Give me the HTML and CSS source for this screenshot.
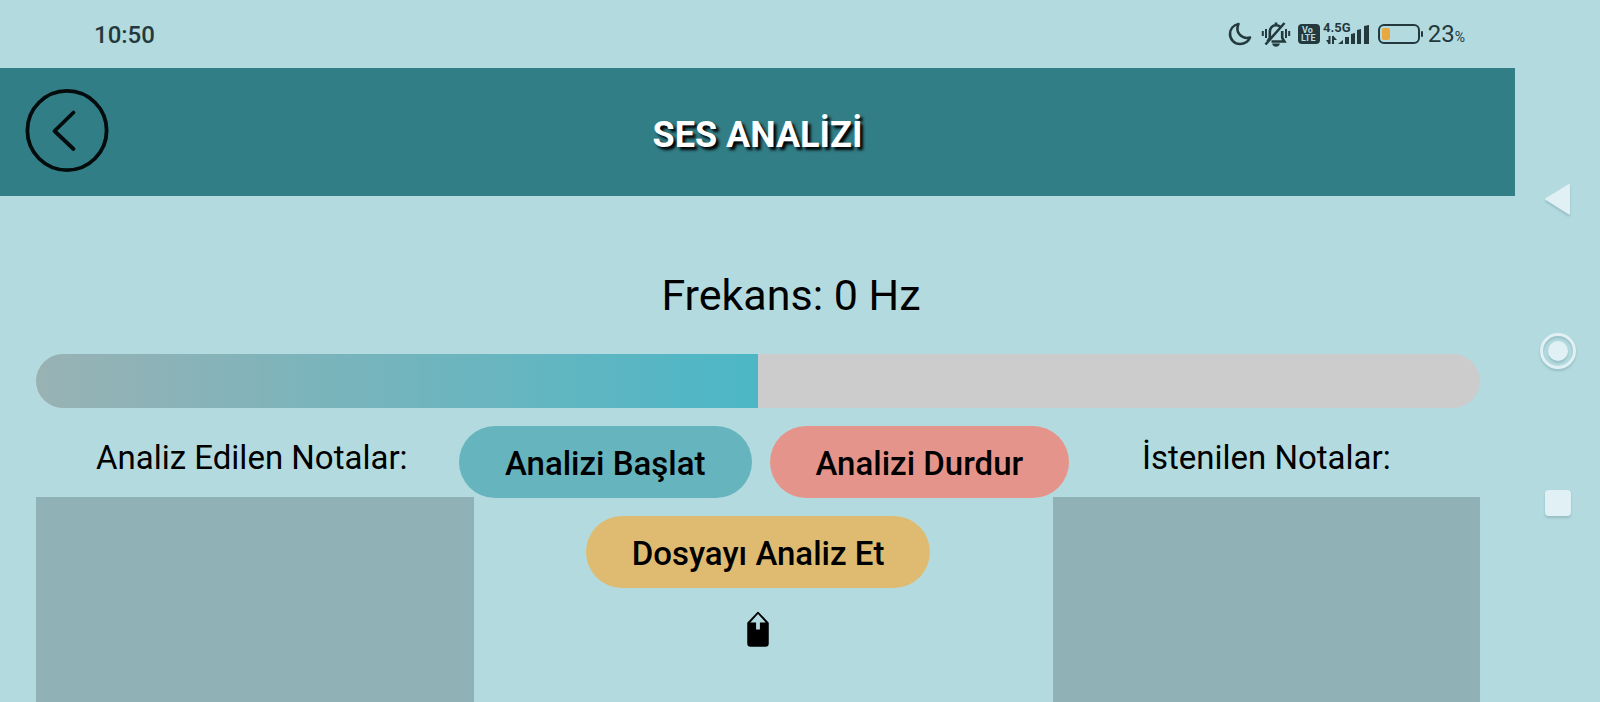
FILE: index.html
```html
<!DOCTYPE html>
<html lang="tr">
<head>
<meta charset="utf-8">
<meta name="viewport" content="width=device-width, initial-scale=1">
<title>Ses Analizi</title>
<link rel="stylesheet" href="styles.css">
</head>
<body>
<div class="screen">
  <div class="app">
    <div class="status">
      <time class="clock">10:50</time>
      <div class="indicators">
        <svg class="moon" width="24" height="24" viewBox="0 0 24 24" fill="none" stroke="currentColor" stroke-width="2.6" stroke-linejoin="round"><path d="M10.500 2C5.500 3 2 7 2 12a10 10 0 0 0 10 10c4.500 0 8.300-2.600 10-6.500C14.500 17.500 6.500 11 10.500 2Z"/></svg>
        <svg class="bell" width="30" height="26" viewBox="0 0 30 26" fill="none" stroke="currentColor" stroke-width="2.600"><path d="M6.500 20.500 8.800 17V11c0-4 2.600-6.800 6.200-6.800 1.800 0 3.300.6 4.300 1.700M21.200 10v7l2.200 3.500H10.500M15 4.200V1.500M4.500 23.500 23.500 2"/><path d="M11 22.500h8c-.8 2.200-2.200 3.300-4 3.300s-3.200-1.100-4-3.300Z" fill="currentColor" stroke="none"/><path d="M5 8v9M25 8v9M1.800 10v5M28.200 10v5" stroke-width="2"/></svg>
        <svg class="volte" width="22" height="28" viewBox="0 0 22 28"><rect y="4" width="22" height="20" rx="4" fill="currentColor"/><text class="badge-text" x="4" y="13">Vo</text><text class="badge-text" x="3" y="21">LTE</text></svg>
        <svg class="signal" width="47" height="30" viewBox="0 -3 47 30" fill="currentColor"><text class="net-text" x="0" y="10">4.5G</text><path d="M6.500 14v8M10 14v8" stroke="currentColor" stroke-width="2"/><path d="M3 18h3v4.500ZM14 18h-4v-4.500Z"/><path d="M15 22l5-4v4zM22 15h4v7h-4zM28 12l4-1v11h-4zM34 8l4-1v15h-4zM41 4l5-1v19h-5z"/></svg>
        <svg class="battery" width="46" height="22" viewBox="0 0 46 22"><rect x="1" y="2" width="40" height="18" rx="5" fill="none" stroke="currentColor" stroke-width="2"/><rect x="4" y="5" width="8" height="12" rx="2" fill="#e9a73f"/><rect x="43" y="8" width="2" height="6" rx="1" fill="currentColor"/></svg>
        <span class="charge">23<small>%</small></span>
      </div>
    </div>

    <header class="header">
      <button class="back" type="button" aria-label="Geri">
        <svg width="84" height="84" viewBox="0 0 84 84" fill="none" stroke="#030b0c" stroke-width="3.800" stroke-linecap="round" stroke-linejoin="round"><circle cx="42" cy="41.500" r="39.600"/><path d="M48.500 23.500 29.500 42 48.500 60"/></svg>
      </button>
      <h1 class="title">SES ANALİZİ</h1>
    </header>

    <main class="content">
      <p class="frequency">Frekans: 0 Hz</p>
      <div class="meter" role="progressbar" aria-label="Frekans" aria-valuenow="50"><div class="meter-fill" style="width:50%"></div></div>
      <div class="columns">
        <section class="notes">
          <h2 class="notes-title notes-title-found">Analiz Edilen Notalar:</h2>
          <div class="panel"></div>
        </section>
        <div class="actions">
          <div class="action-row action-row-live">
            <button class="pill pill-start" type="button">Analizi Başlat</button>
            <button class="pill pill-stop" type="button">Analizi Durdur</button>
          </div>
          <div class="action-row action-row-file">
            <button class="pill pill-file" type="button">Dosyayı Analiz Et</button>
          </div>
          <div class="action-row action-row-file">
            <button class="upload" type="button" aria-label="Dosya yükle">
              <svg width="24" height="36" viewBox="0 0 24 36"><path d="M12 1.500 22 12v20.500a2.500 2.500 0 0 1-2.500 2.500h-15A2.500 2.500 0 0 1 2 32.500V12Z" fill="#000" stroke="#000" stroke-width="1.500" stroke-linejoin="round"/><path d="M12 3 19.700 11.400H13.900V18.500H10.100V11.400H4.300Z" fill="#b3dbdf"/></svg>
            </button>
          </div>
        </div>
        <section class="notes">
          <h2 class="notes-title">İstenilen Notalar:</h2>
          <div class="panel"></div>
        </section>
      </div>
    </main>
  </div>

  <nav class="system-nav" aria-label="Sistem">
    <button class="nav-key" type="button" aria-label="Geri"><svg width="40" height="40" viewBox="0 0 40 40"><path d="M8 20 31 6V34.500Z" fill="#e1f0f4" stroke="#e1f0f4" stroke-width="2" stroke-linejoin="round"/></svg></button>
    <button class="nav-key" type="button" aria-label="Ana ekran"><svg width="40" height="40" viewBox="0 0 40 40"><circle cx="20" cy="20" r="16.500" fill="none" stroke="#e1f0f4" stroke-width="3"/><circle cx="20" cy="20" r="10" fill="#e1f0f4"/></svg></button>
    <button class="nav-key" type="button" aria-label="Son uygulamalar"><svg width="40" height="40" viewBox="0 0 40 40"><rect x="7" y="7" width="26" height="26" rx="4" fill="#e1f0f4"/></svg></button>
  </nav>
</div>
</body>
</html>
```
FILE: styles.css
```css
* {
  box-sizing: border-box;
}

body {
  margin: 0;
  background: #b3dbdf;
  color: #000;
  font-family: Roboto, "Noto Sans", sans-serif;
}

button {
  border: 0;
  padding: 0;
  background: none;
  color: inherit;
  font: inherit;
  cursor: pointer;
}

svg {
  display: block;
}

.screen {
  display: grid;
  grid-template-columns: minmax(0, 1fr) 85px;
  min-height: 100vh;
}

.app {
  display: flex;
  flex-direction: column;
}

.status {
  display: flex;
  align-items: center;
  justify-content: space-between;
  height: 68px;
  padding: 0 50px 0 94px;
  color: #24393d;
}

.clock,
.charge {
  padding-top: 2px;
  font-size: 24px;
  line-height: 28px;
}

.clock {
  font-weight: 500;
}

.charge {
  margin-left: 4px;
}

.charge small {
  font-size: 14px;
}

.indicators {
  display: flex;
  align-items: center;
}

.bell {
  margin-left: 9px;
}

.volte {
  margin-left: 7px;
}

.signal {
  margin-left: 3px;
}

.battery {
  margin-left: 8px;
}

.badge-text {
  fill: #b3dbdf;
  font-size: 9px;
  font-weight: 700;
}

.net-text {
  font-size: 13px;
  font-weight: 700;
}

.header {
  display: grid;
  grid-template-columns: 84px 1fr 84px;
  align-items: center;
  height: 128px;
  padding: 0 25px;
  background: #327e86;
}

.back {
  padding-bottom: 3px;
}

.title {
  margin: 0;
  padding-top: 5px;
  color: #fff;
  font-size: 36px;
  font-weight: 700;
  line-height: 44px;
  text-align: center;
  text-shadow: 3px 3px 3px #000;
}

.content {
  display: flex;
  flex: 1;
  flex-direction: column;
  padding: 72px 35px 0 36px;
}

.frequency {
  margin: 0;
  padding-left: 66px;
  font-size: 43px;
  line-height: 54px;
  text-align: center;
}

.meter {
  height: 54px;
  margin-top: 32px;
  overflow: hidden;
  border-radius: 27px;
  background: #ccc;
}

.meter-fill {
  height: 100%;
  background: linear-gradient(90deg, #99b2b4, #4cb7c6);
}

.columns {
  display: grid;
  flex: 1;
  grid-template-columns: 30.3% minmax(0, 1fr) 29.6%;
}

.notes {
  display: flex;
  flex-direction: column;
}

.notes-title {
  margin: 0;
  padding: 30px 0 19px;
  font-size: 33px;
  font-weight: 400;
  line-height: 40px;
  text-align: center;
}

.notes-title-found {
  padding-right: 6px;
}

.panel {
  flex: 1;
  background: #90b2b6;
}

.actions {
  display: flex;
  flex-direction: column;
  gap: 18px;
  padding-top: 18px;
}

.action-row {
  z-index: 1;
  display: flex;
  justify-content: center;
  gap: 18px;
}

.action-row-live {
  padding-left: 2px;
}

.action-row-file {
  padding-right: 10px;
}

.pill {
  flex: none;
  height: 72px;
  padding: 2px 46px 0;
  border-radius: 36px;
  font-size: 33px;
  font-weight: 500;
  white-space: nowrap;
}

.pill-start {
  background: #66b4be;
}

.pill-stop {
  background: #e5948b;
}

.pill-file {
  background: #dfbb72;
}

.upload {
  padding-top: 5px;
}

.system-nav {
  display: flex;
  flex-direction: column;
  align-items: center;
  justify-content: center;
  gap: 112px;
}

.nav-key {
  filter: drop-shadow(0 2px 1px rgb(60 100 110 / 25%));
}
```
